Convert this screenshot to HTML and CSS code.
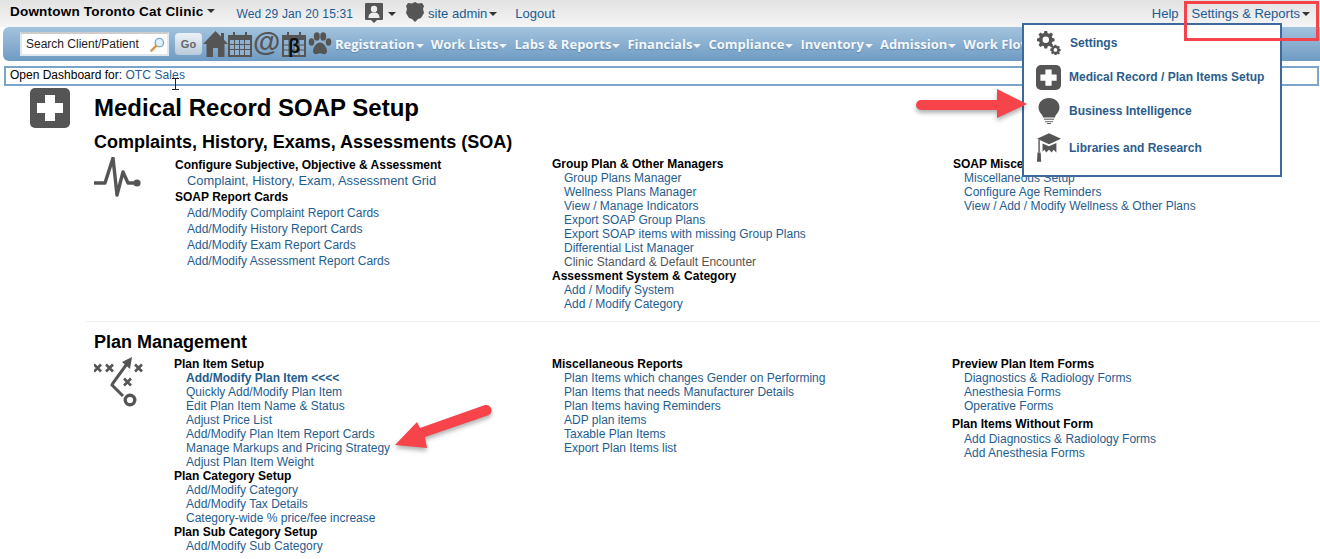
FILE: index.html
```html
<!DOCTYPE html>
<html lang="en">
<head>
<meta charset="utf-8">
<title>Medical Record SOAP Setup</title>
<link rel="stylesheet" href="styles.css">
</head>
<body>
<header class="topbar">
  <span class="clinic">Downtown Toronto Cat Clinic</span><i class="caret dark clinic-caret"></i>
  <a class="date">Wed 29 Jan 20 15:31</a>
  <svg class="user-icon" viewBox="0 0 18 20"><path fill="#555" d="M1 0h16a1 1 0 0 1 1 1v15a1 1 0 0 1-1 1h-5l-3 3-3-3H1a1 1 0 0 1-1-1V1a1 1 0 0 1 1-1z"/><circle cx="9" cy="6" r="3.2" fill="#eee"/><path fill="#eee" d="M3.5 15c0-4 2-5.500 5.500-5.500s5.500 1.500 5.500 5.500z"/></svg>
  <i class="caret dark user-caret"></i>
  <svg class="shield-icon" viewBox="0 0 20 20"><path fill="#555" d="M10 0l3 1.500 4-.5 2 3-1 3 1 4-3 5-3 1-3 3-3-3-3-1-3-5 1-4-1-3 2-3 4 .5z"/></svg>
  <a class="admin">site admin</a><i class="caret dark"></i>
  <a class="logout">Logout</a>
  <a class="help">Help</a>
  <a class="settings">Settings &amp; Reports</a><i class="caret dark"></i>
</header>

<nav class="navbar">
  <div class="search"><span>Search Client/Patient</span>
    <svg class="magnifier" viewBox="0 0 16 16"><circle cx="10" cy="6" r="4.500" fill="#dff0fb" stroke="#7fa9c7" stroke-width="1.500"/><path d="M6.500 9.500L1.500 14.500" stroke="#d39a4c" stroke-width="2.600" stroke-linecap="round"/></svg>
  </div>
  <button class="go">Go</button>
  <div class="nav-icons">
    <svg class="ic-home" viewBox="0 0 25 26"><path fill="#555" d="M12.500 0L25 13h-3.500v13H15v-9h-5v9H3.500V13H0z"/><rect x="18" y="2" width="3" height="7" fill="#555"/></svg>
    <svg class="ic-cal" viewBox="0 0 24 26"><path fill="#555" d="M0 4h5V1h2v3h10V1h2v3h5v22H0z"/><path fill="#8fb0cf" d="M2 9h4v4H2zm5 0h4v4H7zm5 0h4v4h-4zm5 0h5v4h-5zM2 14h4v4H2zm5 0h4v4H7zm5 0h4v4h-4zm5 0h5v4h-5zM2 19h4v5H2zm5 0h4v5H7zm5 0h4v5h-4zm5 0h5v5h-5z"/></svg>
    <span class="ic-at">@</span>
    <div class="ic-beta">
      <svg viewBox="0 0 24 26"><path fill="#555" d="M0 4h5V1h2v3h10V1h2v3h5v22H0z"/><path fill="#8fb0cf" d="M2 9h20v15H2z"/><path stroke="#555" stroke-width="1" fill="none" d="M2 14h20M2 19h20M7 9v15M12 9v15M17 9v15"/></svg>
      <b>β</b>
    </div>
    <svg class="ic-paw" viewBox="0 0 24 24"><g fill="#555"><ellipse cx="3.500" cy="10" rx="2.800" ry="3.800"/><ellipse cx="8.800" cy="4.500" rx="3" ry="4.200"/><ellipse cx="15.200" cy="4.500" rx="3" ry="4.200"/><ellipse cx="20.500" cy="10" rx="2.800" ry="3.800"/><path d="M12 10.500c3.500 0 7 5 7 8.500 0 3-2.500 3.500-4 3-1-.3-2-.7-3-.7s-2 .4-3 .7c-1.500.5-4 0-4-3 0-3.500 3.500-8.500 7-8.500z"/></g></svg>
  </div>
  <ul class="nav-menu">
    <li>Registration<i class="caret"></i></li>
    <li>Work Lists<i class="caret"></i></li>
    <li>Labs &amp; Reports<i class="caret"></i></li>
    <li>Financials<i class="caret"></i></li>
    <li>Compliance<i class="caret"></i></li>
    <li>Inventory<i class="caret"></i></li>
    <li>Admission<i class="caret"></i></li>
    <li>Work Flow<i class="caret"></i></li>
  </ul>
</nav>

<div class="dash">Open Dashboard for: <a>OTC Sales</a></div>

<main class="page">
  <div class="title-row">
    <div class="plus-icon big"><svg viewBox="0 0 40 40"><path fill="#fff" d="M15 7h10v8h8v10h-8v8H15v-8H7V15h8z"/></svg></div>
    <h1>Medical Record SOAP Setup</h1>
  </div>

  <section class="sec sec-soa">
    <h2>Complaints, History, Exams, Assessments (SOA)</h2>
    <div class="sec-grid">
      <svg class="sec-icon pulse" viewBox="0 0 48 40"><path d="M0 26H11L19 1L23 38L29 15L34 26H43" fill="none" stroke="#555" stroke-width="3.400" stroke-linejoin="round"/><circle cx="43" cy="26" r="3.600" fill="#555"/></svg>
      <div class="col wide">
        <h3>Configure Subjective, Objective &amp; Assessment</h3>
        <a class="strong">Complaint, History, Exam, Assessment Grid</a>
        <h3>SOAP Report Cards</h3>
        <a>Add/Modify Complaint Report Cards</a>
        <a>Add/Modify History Report Cards</a>
        <a>Add/Modify Exam Report Cards</a>
        <a>Add/Modify Assessment Report Cards</a>
      </div>
      <div class="col">
        <h3>Group Plan &amp; Other Managers</h3>
        <a>Group Plans Manager</a>
        <a>Wellness Plans Manager</a>
        <a>View / Manage Indicators</a>
        <a>Export SOAP Group Plans</a>
        <a>Export SOAP items with missing Group Plans</a>
        <a>Differential List Manager</a>
        <a class="muted">Clinic Standard &amp; Default Encounter</a>
        <h3>Assessment System &amp; Category</h3>
        <a>Add / Modify System</a>
        <a>Add / Modify Category</a>
      </div>
      <div class="col narrow-indent">
        <h3>SOAP Miscellaneous</h3>
        <a>Miscellaneous Setup</a>
        <a>Configure Age Reminders</a>
        <a>View / Add / Modify Wellness &amp; Other Plans</a>
      </div>
    </div>
  </section>

  <section class="sec sec-plan">
    <h2>Plan Management</h2>
    <div class="sec-grid">
      <svg class="sec-icon plays" viewBox="0 0 50 50" fill="none" stroke="#555" stroke-width="2.600"><path d="M0 7.500l7 7m0-7l-7 7M12 7.500l7 7m0-7l-7 7M41 7.500l7 7m0-7l-7 7M30 21.500l7 7m0-7l-7 7"/><path d="M35 4L19 26l-1 2 11 11" stroke-width="3"/><path d="M38 0L28 5l8 7z" fill="#555" stroke="none"/><circle cx="36" cy="43" r="4.800" stroke-width="3.400"/></svg>
      <div class="col wide">
        <h3>Plan Item Setup</h3>
        <a class="heavy">Add/Modify Plan Item &lt;&lt;&lt;&lt;</a>
        <a>Quickly Add/Modify Plan Item</a>
        <a>Edit Plan Item Name &amp; Status</a>
        <a>Adjust Price List</a>
        <a>Add/Modify Plan Item Report Cards</a>
        <a>Manage Markups and Pricing Strategy</a>
        <a>Adjust Plan Item Weight</a>
        <h3>Plan Category Setup</h3>
        <a>Add/Modify Category</a>
        <a>Add/Modify Tax Details</a>
        <a>Category-wide % price/fee increase</a>
        <h3>Plan Sub Category Setup</h3>
        <a>Add/Modify Sub Category</a>
      </div>
      <div class="col">
        <h3>Miscellaneous Reports</h3>
        <a>Plan Items which changes Gender on Performing</a>
        <a>Plan Items that needs Manufacturer Details</a>
        <a>Plan Items having Reminders</a>
        <a>ADP plan items</a>
        <a>Taxable Plan Items</a>
        <a>Export Plan Items list</a>
      </div>
      <div class="col">
        <h3>Preview Plan Item Forms</h3>
        <a>Diagnostics &amp; Radiology Forms</a>
        <a>Anesthesia Forms</a>
        <a>Operative Forms</a>
        <h3 class="gap">Plan Items Without Form</h3>
        <a>Add Diagnostics &amp; Radiology Forms</a>
        <a>Add Anesthesia Forms</a>
      </div>
    </div>
  </section>
</main>

<div class="dropdown">
  <a class="drop-item">
    <svg class="drop-icon" viewBox="0 0 26 26"><g fill="#555"><path fill-rule="evenodd" d="M8 0h3l.5 2.400 1.700.7 2-1.400 2.200 2.200-1.400 2 .7 1.700 2.300.5v3l-2.300.5-.7 1.700 1.400 2-2.200 2.200-2-1.400-1.700.7L11 19H8l-.5-2.400-1.700-.7-2 1.400-2.200-2.200 1.400-2-.7-1.700L0 11V8l2.300-.5.7-1.700-1.400-2 2.200-2.200 2 1.400 1.700-.7zm1.500 6a3.500 3.500 0 1 0 0 7 3.500 3.500 0 0 0 0-7z"/><path fill-rule="evenodd" d="M19 15h2l.3 1.200 1 .4 1.100-.7 1.400 1.400-.7 1.100.4 1 1.200.3v2l-1.200.3-.4 1 .7 1.100-1.400 1.400-1.100-.7-1 .4L21 26h-2l-.3-1.200-1-.4-1.100.7-1.400-1.400.7-1.100-.4-1-1.200-.3v-2l1.200-.3.4-1-.7-1.100 1.400-1.400 1.100.7 1-.4zm1 3.500a2 2 0 1 0 0 4 2 2 0 0 0 0-4z"/></g></svg>
    <span class="drop-first">Settings</span>
  </a>
  <a class="drop-item">
    <div class="plus-icon small"><svg viewBox="0 0 40 40"><path fill="#fff" d="M15 7h10v8h8v10h-8v8H15v-8H7V15h8z"/></svg></div>
    <span>Medical Record / Plan Items Setup</span>
  </a>
  <a class="drop-item">
    <svg class="drop-icon" viewBox="0 0 24 26"><path fill="#555" d="M12 0c6 0 10.500 4 10.500 9.500 0 3.500-2 5.500-3.500 7.500-.8 1-1 2-1 2.500H6c0-.5-.2-1.500-1-2.500C3.500 15 1.500 13 1.500 9.500 1.500 4 6 0 12 0z"/><path fill="#888" d="M7 20.500h10v1.500H7zM8 23h8v1.300H8z"/><path fill="#666" d="M10 25h4v1h-4z"/></svg>
    <span>Business Intelligence</span>
  </a>
  <a class="drop-item">
    <svg class="drop-icon" viewBox="0 0 26 32"><path fill="#555" d="M13 0l13 6-13 6L0 6z"/><path fill="#555" d="M6 11l7 3 8-3.500V21l-3-3-2 3-3-3-3 3-2-3-2 2zM1.500 7h1.500v14H1.500z"/><path fill="#555" d="M.500 21h3.500l.5 10H0z"/></svg>
    <span>Libraries and Research</span>
  </a>
</div>

<div class="red-box"></div>

<svg class="annot arrow-one" viewBox="0 0 125 40"><path class="arrow" d="M11 15H87V4L117 19 87 33V25H11a5 5 0 0 1 0-10z"/></svg>
<svg class="annot arrow-two" viewBox="0 0 105 55"><path class="arrow" d="M5 45L27 22 30 28 95 5a5.500 5.500 0 0 1 4 10L35 37 37 48z"/></svg>
<svg class="annot ibeam" viewBox="0 0 7 12"><path d="M0 .5h7M0 11.500h7M3.500 .5v11" stroke="#222" fill="none"/></svg>
</body>
</html>
```
FILE: styles.css
```css
* { box-sizing: border-box; }
html, body { margin: 0; padding: 0; overflow: hidden; height: 559px; }
body { font-family: "Liberation Sans", Arial, sans-serif; font-size: 12px; color: #000; background: #fff; position: relative; }
a { color: #1f5d8f; text-decoration: none; }

.caret { display: inline-block; width: 0; height: 0; border-left: 4px solid transparent; border-right: 4px solid transparent; border-top: 4px solid #f2f6fa; margin-left: 1px; }
.caret.dark { border-top-color: #333; }

.topbar { height: 27px; display: flex; align-items: center; padding-left: 10px; background: linear-gradient(#e2e2e2, #f5f5f5); }
.clinic { font-weight: bold; font-size: 13.500px; letter-spacing: .2px; position: relative; top: -2px; }
.clinic-caret { margin-left: 4px; position: relative; top: -3px; }
.date { margin-left: 21px; color: #1b5b93; letter-spacing: .15px; }
.user-icon { width: 18px; height: 20px; margin-left: 12px; position: relative; top: -1px; }
.user-caret { margin-left: 5px; }
.shield-icon { width: 20px; height: 20px; margin-left: 9px; position: relative; top: -2px; }
.admin { margin-left: 3px; color: #1b5b93; font-size: 13px; }
.topbar > .admin + .caret { margin-left: 2px; }
.logout { margin-left: 18px; color: #1b5b93; font-size: 13px; }
.help { margin-left: auto; color: #1b5b93; font-size: 13px; }
.settings { margin-left: 13px; color: #1b5b93; font-size: 13px; }
.topbar > .caret:last-child { margin: 0 10px 0 2px; }

.navbar { height: 34px; margin-left: 3px; display: flex; align-items: center; padding-left: 16px; border-radius: 6px 0 0 6px; background: linear-gradient(#a3c3dd, #6f9bc3); overflow: hidden; }
.search { width: 149px; height: 24px; flex: none; background: #fff; border: 2px solid #dfe7ee; border-top-color: #ccc; display: flex; align-items: center; padding-left: 4px; margin-left: 1px; color: #222; position: relative; }
.magnifier { width: 15px; height: 15px; position: absolute; right: 2px; top: 3px; }
.go { width: 27px; height: 22px; flex: none; margin-left: 6px; padding: 0; border: 0; border-radius: 4px; background: linear-gradient(#eef2f6, #b8cadb); color: #666; font: bold 11px "Liberation Sans", Arial, sans-serif; }
.nav-icons { display: flex; align-items: center; flex: none; margin-left: 1px; }
.ic-home { width: 25px; height: 26px; }
.ic-cal { width: 24px; height: 26px; }
.ic-at { font: bold 28px/26px "Liberation Sans", Arial, sans-serif; color: #555; margin-left: 1px; width: 26px; position: relative; top: -2px; }
.ic-beta { width: 24px; height: 26px; margin-left: 3px; position: relative; }
.ic-beta svg { width: 24px; height: 26px; display: block; }
.ic-beta b { position: absolute; left: 6px; top: 5px; font: bold 20px/21px "Liberation Sans", sans-serif; color: #111; }
.ic-paw { width: 24px; height: 24px; margin-left: 2px; }
.nav-menu { list-style: none; display: flex; margin: 0 0 0 3px; padding: 0; flex: none; font: bold 13px/20px "Open Sans", sans-serif; color: #f4f8fb; text-shadow: 0 1px 1px #5f86aa; }
.nav-menu li { white-space: nowrap; margin-right: 7px; }
.nav-menu .caret { vertical-align: middle; margin-left: 1px; }

.dash { height: 20px; margin: 5px 1px 0 4px; border: 2px solid #7aa6cb; padding-left: 4px; line-height: 15px; background: #fff; }
.dash a { color: #1f5d8f; letter-spacing: .1px; }

.page { padding-left: 30px; }
.title-row { display: flex; align-items: center; margin-top: 2px; height: 40px; }
.plus-icon { background: #555; border-radius: 5px; flex: none; }
.plus-icon svg { display: block; width: 100%; height: 100%; }
.plus-icon.big { width: 40px; height: 40px; }
.plus-icon.small { width: 25px; height: 25px; margin: 0 8px 0 -1px; }
h1 { margin: 0 0 0 24px; font-size: 24px; line-height: 40px; font-weight: bold; }

.sec { margin-left: 64px; }
h2 { margin: 0; font-size: 18px; line-height: 22px; font-weight: bold; }
.sec-soa { margin-top: 3px; }
.sec-plan { margin-top: 10px; border-top: 1px solid #eee; margin-left: 56px; padding: 9px 0 0 8px; }
.sec-grid { display: grid; grid-template-columns: 81px 377px 401px 1fr; }
.sec-plan .sec-grid { grid-template-columns: 80px 378px 400px 1fr; margin-top: 4px; }
.sec-icon { display: block; }
.pulse { width: 48px; height: 40px; margin-top: 4px; }
.plays { width: 50px; height: 50px; margin-top: 0; }

.col { display: flex; flex-direction: column; align-items: flex-start; line-height: 14px; }
h3 { margin: 0; font-size: 12px; line-height: 14px; font-weight: bold; }
.col a { padding-left: 12px; }
.col.narrow-indent a { padding-left: 11px; }
.sec-soa .col { padding-top: 4px; }
.sec-soa .wide { line-height: 16px; padding-top: 4px; }
.sec-soa .wide h3 { line-height: 16px; }
.col a.strong { font-size: 12.900px; }
.heavy { font-weight: bold; }
.col a.muted { color: #555; }
.gap { margin: 4px 0 1px; }

.dropdown { position: absolute; left: 1022px; top: 23px; width: 260px; height: 154px; background: #fff; border: 2px solid #3c6a9c; padding: 1px 0 0 13px; display: flex; flex-direction: column; }
.drop-item { display: flex; align-items: center; font-weight: bold; color: #2b5c8c; height: 34px; }
.drop-item:last-child { height: 40px; }
.drop-icon { width: 24px; height: 26px; margin-right: 8px; flex: none; }
.drop-first { margin-left: 1px; }
.drop-item:last-child .drop-icon { height: 32px; }

.red-box { position: absolute; left: 1184px; top: 1px; width: 135px; height: 40px; border: 3px solid #f4444a; }
.annot { position: absolute; overflow: visible; }
.arrow { fill: #f6444a; filter: drop-shadow(0 3px 2px rgba(0,0,0,.3)); }
.arrow-one { left: 910px; top: 85px; width: 125px; height: 40px; }
.arrow-two { left: 390px; top: 400px; width: 105px; height: 55px; }
.ibeam { left: 172px; top: 78px; width: 7px; height: 12px; }
```
